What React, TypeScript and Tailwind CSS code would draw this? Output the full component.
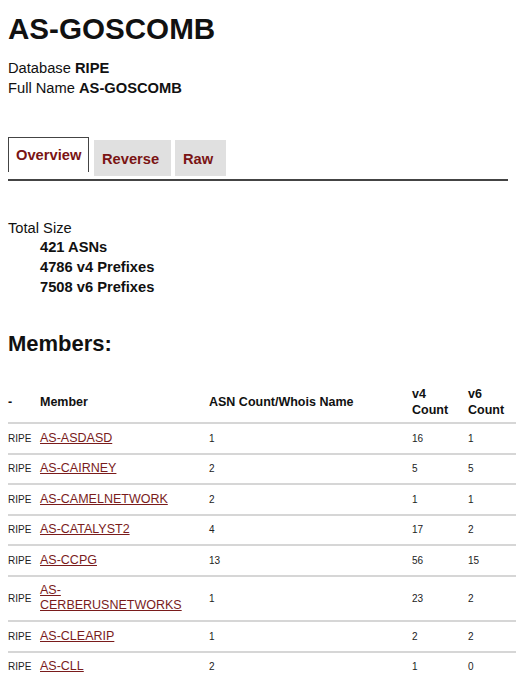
const MEMBERS = [
  { db: "RIPE", name: "AS-ASDASD", asn: "1", v4: "16", v6: "1" },
  { db: "RIPE", name: "AS-CAIRNEY", asn: "2", v4: "5", v6: "5" },
  { db: "RIPE", name: "AS-CAMELNETWORK", asn: "2", v4: "1", v6: "1" },
  { db: "RIPE", name: "AS-CATALYST2", asn: "4", v4: "17", v6: "2" },
  { db: "RIPE", name: "AS-CCPG", asn: "13", v4: "56", v6: "15" },
  { db: "RIPE", name: "AS-CERBERUSNETWORKS", asn: "1", v4: "23", v6: "2" },
  { db: "RIPE", name: "AS-CLEARIP", asn: "1", v4: "2", v6: "2" },
  { db: "RIPE", name: "AS-CLL", asn: "2", v4: "1", v6: "0" },
];

const COLS = "grid grid-cols-[32px_169px_203px_56px_1fr] items-center border-b-2 border-[#d6d6d6]";

export default function App() {
  return (
    <div className="min-h-[680px] bg-white px-2 text-[#111] [font-family:'Liberation_Sans',Arial,sans-serif]">
      <h1 className="pt-[12px] text-[29.6px] font-bold leading-[34px]">AS-GOSCOMB</h1>

      <div className="mt-[12px] text-[14.7px] leading-[20px]">
        <div>
          Database <b>RIPE</b>
        </div>
        <div>
          Full Name <b>AS-GOSCOMB</b>
        </div>
      </div>

      {/* tabs */}
      <div className="mt-[39px] flex items-start text-[14.7px] font-bold text-[#7a1414]">
        <div className="flex h-[35px] w-[81px] items-center border border-b-0 border-[#444] bg-white pl-[7px]">
          Overview
        </div>
        <div className="ml-[5px] mt-[3px] flex h-[36px] w-[77px] items-center bg-[#e0e0e0] pl-[8px] pt-[2px]">
          Reverse
        </div>
        <div className="ml-[4px] mt-[3px] flex h-[36px] w-[51px] items-center bg-[#e0e0e0] pl-[8px] pt-[2px]">
          Raw
        </div>
      </div>
      <div className="mt-[3px] h-[1.5px] bg-[#444]" />

      <div className="mt-[38px] text-[14.7px] leading-[19.8px]">
        <div>Total Size</div>
        <div className="pl-[32px] font-bold">
          <div>421 ASNs</div>
          <div>4786 v4 Prefixes</div>
          <div>7508 v6 Prefixes</div>
        </div>
      </div>

      <h2 className="mt-[33.5px] text-[22px] font-bold leading-[25px]">Members:</h2>

      <div className="mt-[19px] -mr-2">
        <div className={`${COLS} pb-[4px] pt-[12px] text-[12.5px] font-bold leading-[15.5px]`}>
          <div>-</div>
          <div>Member</div>
          <div>ASN Count/Whois Name</div>
          <div>
            v4
            <br />
            Count
          </div>
          <div>
            v6
            <br />
            Count
          </div>
        </div>
        {MEMBERS.map((m) => (
          <div key={m.name} className={`${COLS} py-[6.75px] text-[10px] leading-[15px] text-[#222]`}>
            <div>{m.db}</div>
            <div className="pr-[14px]">
              <a href="#" className="text-[12.5px] text-[#7a1c1c] underline">
                {m.name}
              </a>
            </div>
            <div>{m.asn}</div>
            <div>{m.v4}</div>
            <div>{m.v6}</div>
          </div>
        ))}
      </div>
    </div>
  );
}
